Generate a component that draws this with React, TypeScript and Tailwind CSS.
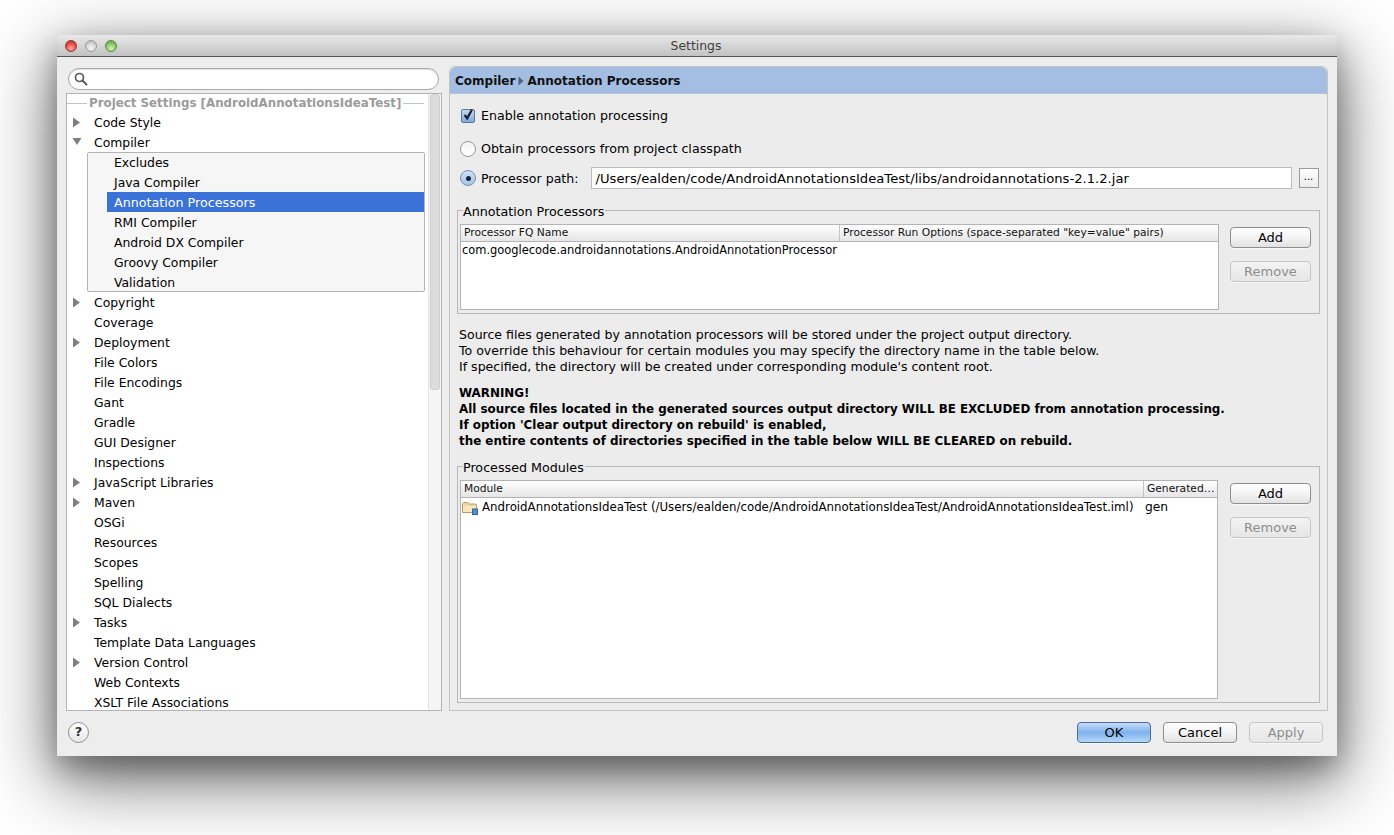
import React from "react";

const FONT = "[font-family:'DejaVu_Sans',sans-serif]";

function ArrowRight() {
  return (
    <svg width="9" height="11" viewBox="0 0 9 11" className="block">
      <path d="M1 0.5L8 5.5L1 10.5Z" fill="#7f7f7f" />
    </svg>
  );
}
function ArrowDown() {
  return (
    <svg width="10" height="9" viewBox="0 0 10 9" className="block">
      <path d="M0.5 1L9.5 1L5 8Z" fill="#7f7f7f" />
    </svg>
  );
}

function TreeRow({ label, arrow }: { label: string; arrow?: "right" | "down" }) {
  return (
    <div className="relative h-5 shrink-0 flex items-center pl-[27px] pt-[2px] text-[12.4px] leading-5 text-black whitespace-nowrap">
      {arrow && (
        <span className="absolute left-[5px] top-[5px]">
          {arrow === "right" ? <ArrowRight /> : <ArrowDown />}
        </span>
      )}
      {label}
    </div>
  );
}

function ChildRow({ label, selected }: { label: string; selected?: boolean }) {
  return (
    <div
      className={
        selected
          ? "h-5 ml-[19px] pl-[7px] pt-[2px] flex items-center text-[12.7px] bg-[#3a72d8] text-white whitespace-nowrap"
          : "h-5 ml-[19px] pl-[7px] pt-[2px] flex items-center text-[12.4px] text-black whitespace-nowrap"
      }
    >
      {label}
    </div>
  );
}

function MacButton({ label, disabled, primary, className }: { label: string; disabled?: boolean; primary?: boolean; className: string }) {
  let tone = "border-[#8e8e8e] bg-gradient-to-b from-white via-[#f4f4f4] to-[#e2e2e2] text-black";
  if (disabled) tone = "border-[#c6c6c6] bg-gradient-to-b from-[#f3f3f3] to-[#e6e6e6] text-[#8d8d8d]";
  if (primary) tone = "border-[#4c6a9c] bg-gradient-to-b from-[#c7dcf6] via-[#7fb2ec] to-[#b4d8f8] text-black";
  return (
    <div className={`flex items-center justify-center rounded-[4px] border text-[13px] leading-none shadow-[0_1px_0_rgba(255,255,255,0.6)] ${tone} ${className}`}>
      {label}
    </div>
  );
}

function TrafficLight({ tone }: { tone: "red" | "gray" | "green" }) {
  const cls =
    tone === "red"
      ? "bg-[radial-gradient(circle_at_50%_75%,#ffb0a8_0%,#ee5a52_45%,#b3211b_100%)] border-[#8e3a36]"
      : tone === "green"
        ? "bg-[radial-gradient(circle_at_50%_75%,#d6f5b4_0%,#8ccb6c_50%,#4f9a3d_100%)] border-[#5c8a4a]"
        : "bg-[radial-gradient(circle_at_50%_75%,#f4f4f4_0%,#d8d8d8_50%,#b0b0b0_100%)] border-[#989898]";
  return <span className={`block w-[12px] h-[12px] rounded-full border ${cls}`} />;
}

function HeaderCell({ label, className }: { label: string; className: string }) {
  return <div className={`h-full flex items-center pl-[3px] text-[10.7px] text-[#111] whitespace-nowrap overflow-hidden ${className}`}>{label}</div>;
}

function FolderIcon() {
  return (
    <svg width="16" height="14" viewBox="0 0 16 14" className="block shrink-0">
      <path d="M0.5 2.5L1.5 1.5H5.5L7 3H13.5L14.5 4V11.5H0.5Z" fill="#eed9a2" stroke="#b59a62" />
      <path d="M1 5H14V11H1Z" fill="#f6e7bd" />
      <rect x="10.5" y="8" width="5" height="5.5" fill="#4d8fd0" stroke="#2e6aa6" />
    </svg>
  );
}

export default function App() {
  return (
    <div className={`w-[1394px] h-[835px] overflow-hidden bg-white pt-[35px] pl-[57px] ${FONT}`}>
      <div className="w-[1280px] h-[721px] flex flex-col rounded-t-[5px] bg-[#ededed] shadow-[0_22px_70px_4px_rgba(0,0,0,0.56),0_12px_28px_rgba(0,0,0,0.3)]">
        {/* Title bar */}
        <div className="relative h-[22px] shrink-0 rounded-t-[5px] border-b border-[#555] bg-gradient-to-b from-[#e9e9e9] to-[#c2c2c2] flex items-center justify-center pr-[2px] pt-[2px] text-[12.4px] text-[#404040]">
          <div className="absolute left-[8px] top-[5px] flex gap-[8px]">
            <TrafficLight tone="red" />
            <TrafficLight tone="gray" />
            <TrafficLight tone="green" />
          </div>
          Settings
        </div>

        {/* Main */}
        <div className="h-[654px] shrink-0 flex pl-[9px] pr-[9px] pt-[9px] gap-[7px]">
          {/* Left */}
          <div className="w-[376px] shrink-0 flex flex-col">
            <div className="mt-[2px] ml-[2px] w-[371px] h-[22px] shrink-0 rounded-full border border-[#a8a8a8] bg-white flex items-center pl-[5px] shadow-[inset_0_1px_1px_rgba(0,0,0,0.12)]">
              <svg width="14" height="14" viewBox="0 0 14 14" className="block">
                <circle cx="5.5" cy="5.5" r="4" fill="none" stroke="#5a5a5a" strokeWidth="1.7" />
                <path d="M8.5 8.5L12.5 12.5" stroke="#5a5a5a" strokeWidth="2" strokeLinecap="round" />
              </svg>
            </div>
            <div className="mt-[3px] h-[618px] shrink-0 flex border border-[#b4b4b4] bg-white overflow-hidden">
              <div className="flex-1 min-w-0 flex flex-col overflow-hidden">
                <div className="h-[18px] shrink-0 flex items-center pr-[4px] gap-[2px]">
                  <span className="w-[20px] h-px bg-[#c4c4c4]" />
                  <span className="pt-[2px] text-[11.85px] font-bold text-[#9b9b9b] whitespace-nowrap">Project Settings [AndroidAnnotationsIdeaTest]</span>
                  <span className="flex-1 h-px bg-[#c4c4c4]" />
                </div>
                <TreeRow label="Code Style" arrow="right" />
                <TreeRow label="Compiler" arrow="down" />
                <div className="ml-[20px] mr-[3px] h-[140px] shrink-0 rounded-[2px] border border-[#b4b4b4] bg-[#f6f6f6]">
                  <div className="-my-px">
                    <ChildRow label="Excludes" />
                    <ChildRow label="Java Compiler" />
                    <ChildRow label="Annotation Processors" selected />
                    <ChildRow label="RMI Compiler" />
                    <ChildRow label="Android DX Compiler" />
                    <ChildRow label="Groovy Compiler" />
                    <ChildRow label="Validation" />
                  </div>
                </div>
                <TreeRow label="Copyright" arrow="right" />
                <TreeRow label="Coverage" />
                <TreeRow label="Deployment" arrow="right" />
                <TreeRow label="File Colors" />
                <TreeRow label="File Encodings" />
                <TreeRow label="Gant" />
                <TreeRow label="Gradle" />
                <TreeRow label="GUI Designer" />
                <TreeRow label="Inspections" />
                <TreeRow label="JavaScript Libraries" arrow="right" />
                <TreeRow label="Maven" arrow="right" />
                <TreeRow label="OSGi" />
                <TreeRow label="Resources" />
                <TreeRow label="Scopes" />
                <TreeRow label="Spelling" />
                <TreeRow label="SQL Dialects" />
                <TreeRow label="Tasks" arrow="right" />
                <TreeRow label="Template Data Languages" />
                <TreeRow label="Version Control" arrow="right" />
                <TreeRow label="Web Contexts" />
                <TreeRow label="XSLT File Associations" />
              </div>
              {/* Scrollbar */}
              <div className="w-[13px] shrink-0 border-l border-[#e4e4e4] bg-[#f5f5f5] pl-px pr-px">
                <div className="w-[10px] h-[296px] rounded-[3px] bg-[#dcdcdc] border border-[#cfcfcf]" />
              </div>
            </div>
          </div>

          {/* Right */}
          <div className="w-[879px] h-[645px] shrink-0 flex flex-col rounded-t-[6px] border border-[#c3c3c3] bg-[#ececec] px-[7px] pb-[8px] text-[12.6px] text-black">
            <div className="-mx-[7px] h-[27px] shrink-0 rounded-t-[6px] bg-[#a4bde2] border-b border-[#b5c4da] flex items-center pl-[5px] pt-[2px] text-[12px] font-bold text-[#111] gap-[3px]">
              <span>Compiler</span>
              <svg width="6" height="10" viewBox="0 0 6 10" className="block">
                <path d="M0.5 0.5L5.5 5L0.5 9.5Z" fill="#55617a" />
              </svg>
              <span>Annotation Processors</span>
            </div>

            <div className="mt-[13px] h-[18px] shrink-0 flex items-center pl-[4px]">
              <span className="w-[14px] h-[14px] rounded-[2px] border border-[#5f7595] bg-gradient-to-b from-[#c4d9f3] to-[#7fabe0] flex items-center justify-center">
                <svg width="14" height="15" viewBox="0 0 14 15" className="block -mt-[3px]">
                  <path d="M3 8L6 12L11.5 2" fill="none" stroke="#1a2230" strokeWidth="2.6" />
                </svg>
              </span>
              <span className="ml-[6px]">Enable annotation processing</span>
            </div>

            <div className="mt-[15px] h-[18px] shrink-0 flex items-center pl-[3px]">
              <span className="w-[16px] h-[16px] rounded-full border border-[#9a9a9a] bg-gradient-to-b from-[#f4f4f4] to-white" />
              <span className="ml-[5px] text-[12.7px]">Obtain processors from project classpath</span>
            </div>

            <div className="mt-[9px] h-[22px] shrink-0 flex items-center pl-[3px]">
              <span className="w-[16px] h-[16px] rounded-full border border-[#7b8ea8] bg-gradient-to-b from-[#cfe0f5] to-[#a3c6ee] flex items-center justify-center">
                <span className="w-[5px] h-[5px] rounded-full bg-[#1c2433]" />
              </span>
              <span className="ml-[5px] pt-[2px]">Processor path:</span>
              <div className="ml-[12px] w-[701px] h-[22px] shrink-0 border border-[#bdbdbd] bg-white flex items-center pl-[4px] pt-[1px] text-[13.15px]">/Users/ealden/code/AndroidAnnotationsIdeaTest/libs/androidannotations-2.1.2.jar</div>
              <div className="ml-[7px] w-[20px] h-[20px] shrink-0 border border-[#9a9a9a] bg-gradient-to-b from-white to-[#ececec] flex items-center justify-center text-[10px] leading-none pb-[3px]">...</div>
            </div>

            <fieldset className="mt-[14px] h-[111px] shrink-0 border border-[#b9b9b9] px-[2px]">
              <legend className="ml-[3px] text-[12.7px] leading-[15px] pr-[1px] translate-y-px">Annotation Processors</legend>
              <div className="flex mt-[6px]">
                <div className="w-[759px] h-[86px] shrink-0 border border-[#b4b4b4] bg-white flex flex-col">
                  <div className="h-[17px] shrink-0 flex border-b border-[#b4b4b4] bg-gradient-to-b from-white via-[#f2f2f2] to-[#e6e6e6]">
                    <HeaderCell label="Processor FQ Name" className="w-[379px] border-r border-[#c4c4c4]" />
                    <HeaderCell label={'Processor Run Options (space-separated "key=value" pairs)'} className="flex-1" />
                  </div>
                  <div className="h-[18px] flex items-center pl-px text-[11.45px] whitespace-nowrap">com.googlecode.androidannotations.AndroidAnnotationProcessor</div>
                </div>
                <div className="ml-[11px] mt-[3px] flex flex-col gap-[13px]">
                  <MacButton label="Add" className="w-[81px] h-[21px]" />
                  <MacButton label="Remove" disabled className="w-[81px] h-[21px]" />
                </div>
              </div>
            </fieldset>

            <div className="mt-[13px] shrink-0 text-[12.55px] leading-[16px] pl-[2px] whitespace-nowrap">
              <div>Source files generated by annotation processors will be stored under the project output directory.</div>
              <div>To override this behaviour for certain modules you may specify the directory name in the table below.</div>
              <div>If specified, the directory will be created under corresponding module's content root.</div>
              <div className="mt-[10px] text-[11.9px] font-bold">WARNING!</div>
              <div className="text-[11.9px] font-bold">All source files located in the generated sources output directory WILL BE EXCLUDED from annotation processing.</div>
              <div className="text-[11.9px] font-bold">If option 'Clear output directory on rebuild' is enabled,</div>
              <div className="text-[11.9px] font-bold">the entire contents of directories specified in the table below WILL BE CLEARED on rebuild.</div>
            </div>

            <fieldset className="mt-[10px] h-[244px] shrink-0 border border-[#b9b9b9] px-[2px]">
              <legend className="ml-[3px] text-[12.7px] leading-[15px] pr-[1px] translate-y-px">Processed Modules</legend>
              <div className="flex mt-[6px]">
                <div className="w-[758px] h-[219px] shrink-0 border border-[#b4b4b4] bg-white flex flex-col">
                  <div className="h-[17px] shrink-0 flex border-b border-[#b4b4b4] bg-gradient-to-b from-white via-[#f2f2f2] to-[#e6e6e6]">
                    <HeaderCell label="Module" className="w-[683px] border-r border-[#c4c4c4]" />
                    <HeaderCell label="Generated…" className="flex-1" />
                  </div>
                  <div className="h-[18px] flex items-center text-[11.8px] whitespace-nowrap">
                    <div className="w-[684px] flex items-center gap-[4px] pl-px pt-[2px] overflow-hidden">
                      <FolderIcon />
                      <span>AndroidAnnotationsIdeaTest (/Users/ealden/code/AndroidAnnotationsIdeaTest/AndroidAnnotationsIdeaTest.iml)</span>
                    </div>
                    <span className="text-[12.3px]">gen</span>
                  </div>
                </div>
                <div className="ml-[12px] mt-[3px] flex flex-col gap-[13px]">
                  <MacButton label="Add" className="w-[81px] h-[21px]" />
                  <MacButton label="Remove" disabled className="w-[81px] h-[21px]" />
                </div>
              </div>
            </fieldset>
          </div>
        </div>

        {/* Footer */}
        <div className="flex-1 flex items-center pl-[11px] pr-[14px] pb-[3px]">
          <div className="w-[21px] h-[21px] rounded-full border border-[#8e8e8e] bg-gradient-to-b from-white to-[#e6e6e6] flex items-center justify-center text-[13px] font-bold text-[#333]">?</div>
          <div className="ml-auto flex gap-[12px]">
            <MacButton label="OK" primary className="w-[74px] h-[21px]" />
            <MacButton label="Cancel" className="w-[74px] h-[21px]" />
            <MacButton label="Apply" disabled className="w-[74px] h-[21px]" />
          </div>
        </div>
      </div>
    </div>
  );
}
